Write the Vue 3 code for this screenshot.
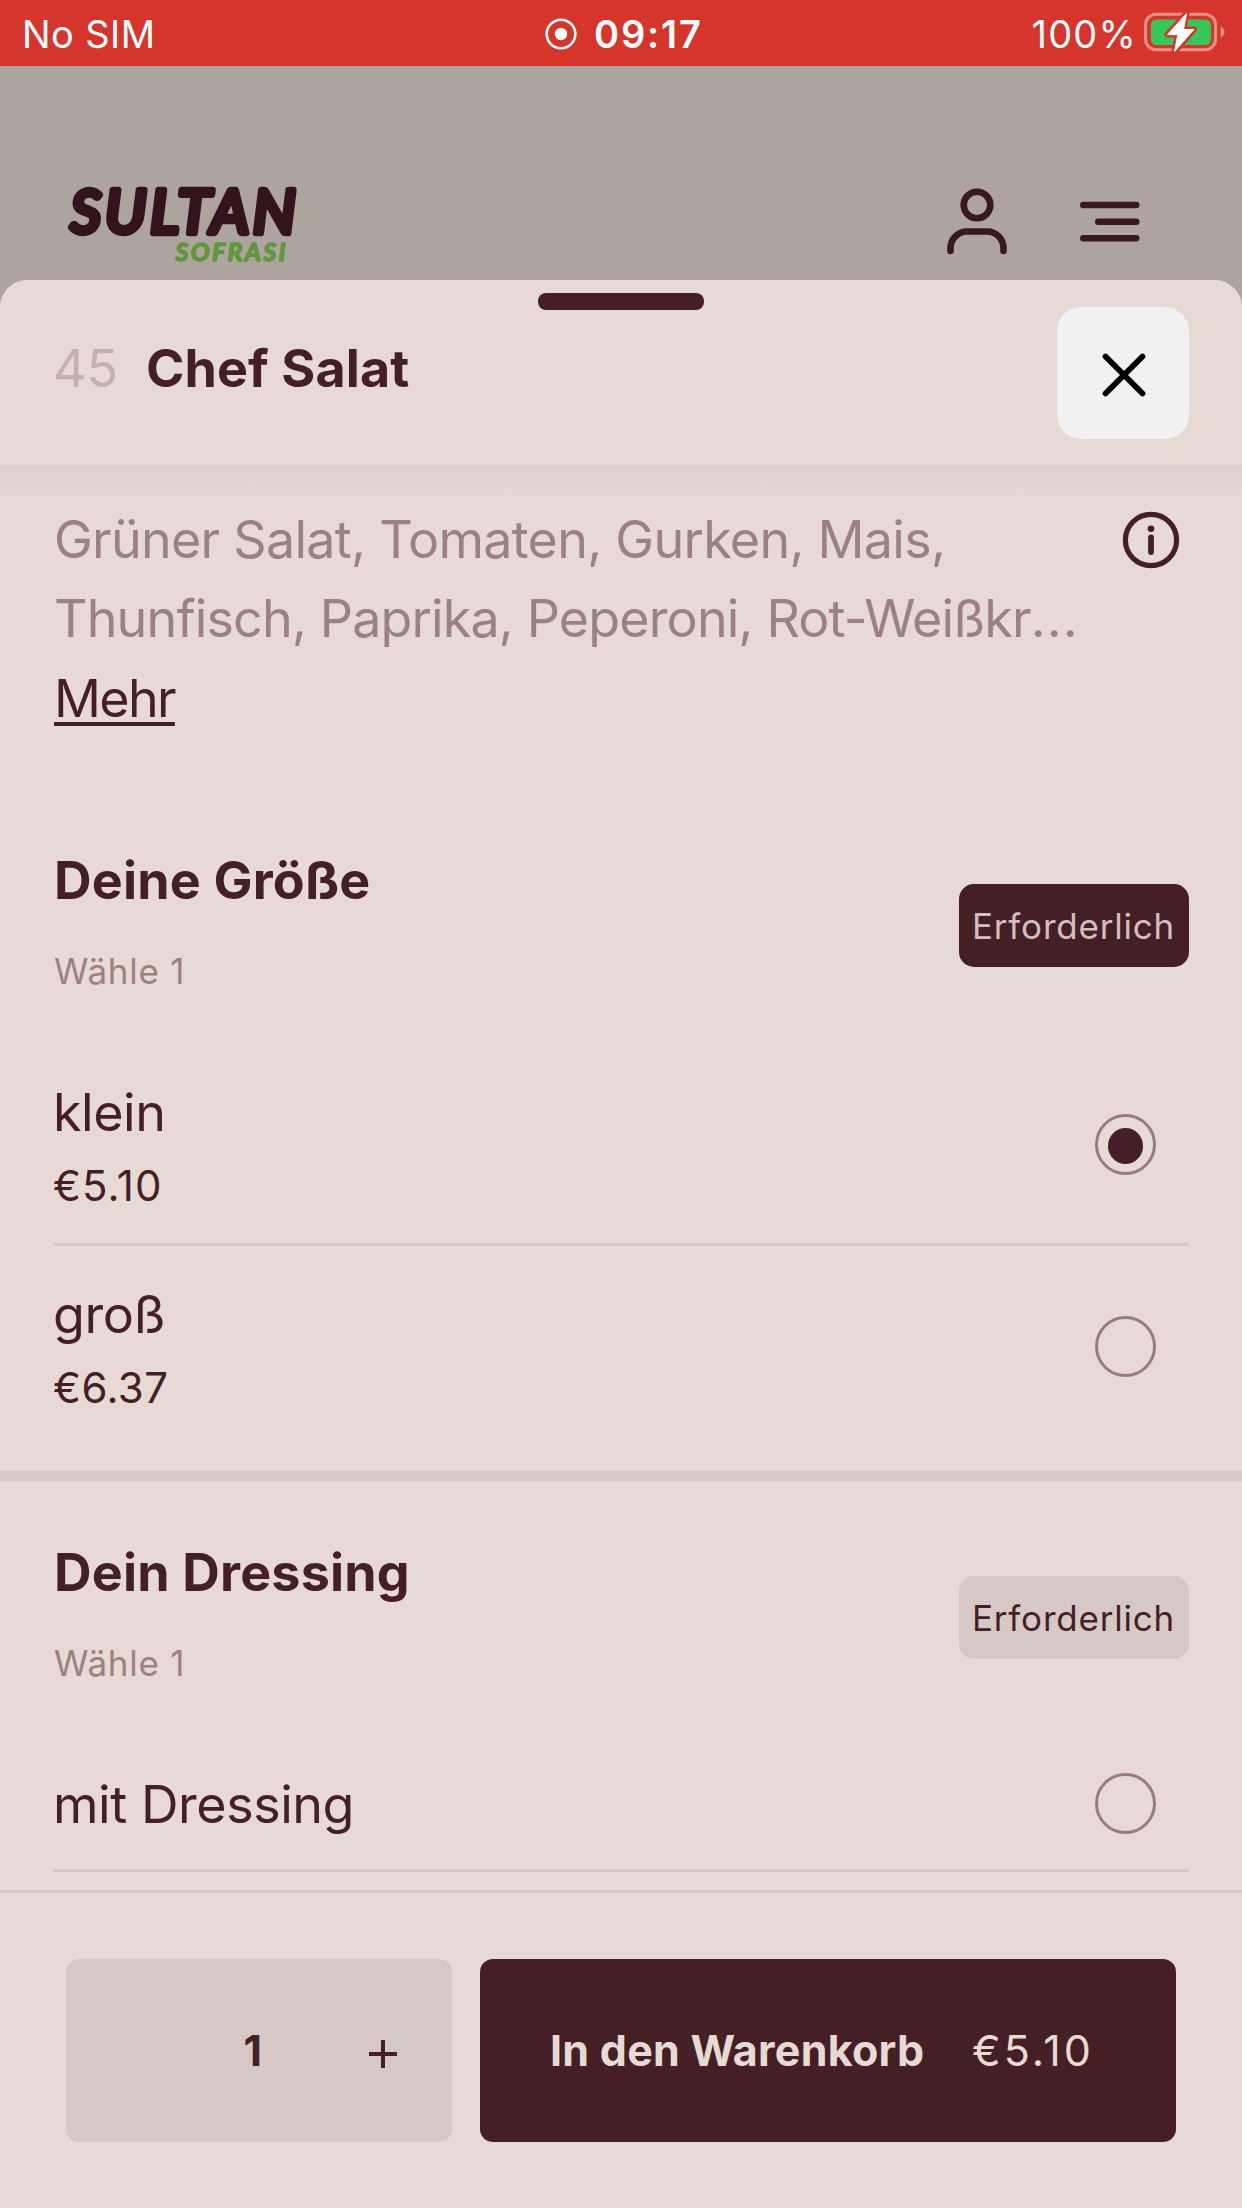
<script setup>
import { ref } from 'vue'

const quantity = ref(1)
const groups = ref([
  {
    title: 'Deine Größe',
    hint: 'Wähle 1',
    selected: 'klein',
    options: [
      { name: 'klein', price: '€5.10', tracking: 'wide' },
      { name: 'groß', price: '€6.37', tracking: '' },
    ],
  },
  {
    title: 'Dein Dressing',
    hint: 'Wähle 1',
    selected: null,
    options: [{ name: 'mit Dressing' }],
  },
])
</script>

<template>
  <div class="screen">
    <div class="status-bar">
      <span class="carrier">No SIM</span>
      <div class="clock">
        <svg width="32" height="32" viewBox="0 0 32 32">
          <circle cx="16" cy="16" r="14.3" fill="none" stroke="#fff" stroke-width="2.6" />
          <circle cx="16" cy="16" r="6.2" fill="#fff" />
        </svg>
        <span>09:17</span>
      </div>
      <div class="power">
        <span>100%</span>
        <svg width="82" height="42" viewBox="0 0 82 42">
          <rect x="1.5" y="3.2" width="70" height="35.5" rx="10.5" fill="none" stroke="#e98f89" stroke-width="3" />
          <path d="M76.5 15.5c2.8 1.2 4 3 4 5.5s-1.2 4.3-4 5.5z" fill="#e98f89" />
          <rect x="7" y="8.5" width="60" height="25.5" rx="5.5" fill="#35c759" />
          <path d="M42.5 2.5 23.5 23.6h10.3L30.5 40.5 50 18.5H39.5z" fill="#fff" stroke="#d6352c" stroke-width="6" stroke-linejoin="round" />
          <path d="M42.5 2.5 23.5 23.6h10.3L30.5 40.5 50 18.5H39.5z" fill="#fff" stroke="#fff" stroke-width="1" stroke-linejoin="round" />
        </svg>
      </div>
    </div>

    <header class="site-header">
      <svg class="logo" width="240" height="110" viewBox="0 -20 240 110">
        <text class="logo-main" x="5.5" y="52.5" textLength="225" lengthAdjust="spacing">SULTAN</text>
        <text class="logo-sub" x="110.500" y="80.500" textLength="110" lengthAdjust="spacing">SOFRASI</text>
      </svg>
      <div class="site-icons">
        <svg width="64" height="70" viewBox="0 0 64 70" class="line-icon">
          <circle cx="32" cy="17" r="13.3" />
          <path d="M5.5 63v-3A16.5 16.5 0 0 1 22 43.5h20A16.5 16.5 0 0 1 58.5 60v3" />
        </svg>
        <svg width="64" height="70" viewBox="0 0 64 70" class="line-icon">
          <path d="M6.300 17h52.900M21.300 33.700h37.900M6.300 50.200h52.900" />
        </svg>
      </div>
    </header>

    <main class="sheet">
      <div class="sheet-header">
        <div class="handle"></div>
        <div class="product">
          <span class="number">45</span>
          <h1>Chef Salat</h1>
        </div>
        <button class="close" aria-label="Schließen">
          <svg width="46" height="46" viewBox="0 0 46 46">
            <path d="M4.5 4.5l37 37M41.5 4.5l-37 37" fill="none" stroke="#000" stroke-width="5.8" stroke-linecap="round" />
          </svg>
        </button>
      </div>

      <div class="content">
        <section class="description">
          <div class="copy">
            <p>Grüner Salat, Tomaten, Gurken, Mais,</p>
            <p class="clipped">Thunfisch, Paprika, Peperoni, Rot-Weißkr<span class="dots">...</span></p>
            <a class="more">Mehr</a>
          </div>
          <svg class="info" width="58" height="58" viewBox="0 0 58 58">
            <circle cx="29" cy="29" r="25.6" fill="none" stroke="#451f26" stroke-width="5.2" />
            <circle cx="29" cy="17.8" r="3.3" fill="#451f26" />
            <path d="M29 26.5v14.5" stroke="#451f26" stroke-width="5.8" stroke-linecap="round" />
          </svg>
        </section>

        <section v-for="group in groups" :key="group.title" class="group">
          <div class="group-header">
            <div>
              <h2>{{ group.title }}</h2>
              <p class="hint">{{ group.hint }}</p>
            </div>
            <span class="badge" :class="{ filled: group.selected }">Erforderlich</span>
          </div>
          <div class="options">
            <div v-for="option in group.options" :key="option.name" class="option" @click="group.selected = option.name">
              <div>
                <div class="name">{{ option.name }}</div>
                <div v-if="option.price" class="price" :class="option.tracking">{{ option.price }}</div>
              </div>
              <span class="radio"><i v-if="group.selected === option.name"></i></span>
            </div>
          </div>
        </section>
      </div>

      <footer class="footer">
        <div class="stepper">
          <span class="quantity">{{ quantity }}</span>
          <svg class="plus" width="30" height="30" viewBox="0 0 30 30">
            <path d="M15 1v28M1 15h28" stroke="#451f26" stroke-width="4" />
          </svg>
        </div>
        <button class="add">
          <span class="add-label">In den Warenkorb</span>
          <span class="add-price">€5.10</span>
        </button>
      </footer>
    </main>
  </div>
</template>

<style>
body {
  margin: 0;
}
</style>

<style scoped>
.screen {
  box-sizing: border-box;
  display: flex;
  flex-direction: column;
  width: 1242px;
  height: 2208px;
  overflow: hidden;
  background: #ada49f;
  color: #451f26;
  font-family: Inter, "Liberation Sans", sans-serif;
}
h1,
h2,
p {
  margin: 0;
}
button {
  border: 0;
  padding: 0;
  font-family: inherit;
}
svg {
  display: block;
  flex: none;
}

.status-bar {
  display: grid;
  grid-template-columns: 545px 1fr auto;
  align-items: center;
  box-sizing: border-box;
  height: 66px;
  padding: 2px 16px 0 0;
  background: #d6352c;
  color: #fff;
  font-size: 38px;
  line-height: 64px;
}
.carrier {
  padding-left: 22px;
  letter-spacing: 0.4px;
}
.clock {
  display: flex;
  align-items: center;
  gap: 17px;
  font-weight: 600;
  letter-spacing: 1.85px;
}
.power {
  display: flex;
  align-items: center;
  gap: 7px;
  letter-spacing: 1.2px;
}
.power svg {
  margin-top: -4px;
}

.site-header {
  display: flex;
  justify-content: space-between;
  box-sizing: border-box;
  height: 214px;
  padding: 94px 101px 0 65px;
}
.logo text {
  font-family: Lato, sans-serif;
  font-style: italic;
  stroke-linejoin: round;
  stroke-linecap: round;
}
.logo-main {
  font-size: 60px;
  fill: #33141a;
  stroke: #33141a;
  stroke-width: 6.4px;
}
.logo-sub {
  font-size: 25px;
  font-weight: 700;
  fill: #62963a;
  stroke: #62963a;
  stroke-width: 1.5px;
}
.site-icons {
  display: flex;
  gap: 68px;
  padding-top: 28px;
}
.line-icon {
  fill: none;
  stroke: #37191f;
  stroke-width: 6.6px;
  stroke-linecap: round;
}

.sheet {
  display: flex;
  flex-direction: column;
  flex: 1;
  min-height: 0;
  overflow: hidden;
  border-radius: 27px 27px 0 0;
  background: #e7dad5;
}
.sheet-header {
  position: relative;
  display: flex;
  align-items: flex-start;
  justify-content: space-between;
  box-sizing: border-box;
  height: 185px;
  padding: 27px 53px 0;
}
.handle {
  position: absolute;
  top: 13px;
  left: 538px;
  width: 166px;
  height: 17px;
  border-radius: 8px;
  background: #451f26;
}
.product {
  display: flex;
  padding-top: 30px;
  font-size: 52px;
  line-height: 64px;
}
.number {
  width: 93px;
  color: #c4b1af;
  font-weight: 400;
}
h1 {
  font-size: 52px;
  font-weight: 700;
  letter-spacing: 0.1px;
}
.close {
  display: flex;
  align-items: center;
  justify-content: center;
  width: 132px;
  height: 132px;
  padding: 4px 0 0 2px;
  border-radius: 24px;
  background: #f1f1f1;
}

.content {
  height: 1425px;
  overflow: hidden;
  background: linear-gradient(#dacfcb, #e7dad5 35px);
}
.description {
  display: flex;
  justify-content: space-between;
  align-items: flex-start;
  height: 349px;
  padding: 35px 62px 0 54px;
  font-size: 52px;
  line-height: 79.3px;
}
.copy {
  white-space: nowrap;
}
.copy p {
  color: #9b8180;
  letter-spacing: -0.72px;
}
.copy .clipped {
  letter-spacing: -0.85px;
}
.dots {
  letter-spacing: 1px;
}
.more {
  letter-spacing: -1.7px;
  text-decoration: underline;
  text-decoration-thickness: 4px;
  text-underline-offset: 5px;
  text-decoration-skip-ink: none;
}
.info {
  margin-top: 11px;
}

.group + .group {
  border-top: 10px solid #d6c8c4;
}
.group {
  box-sizing: border-box;
}
.group-header {
  display: flex;
  justify-content: space-between;
  align-items: flex-start;
  height: 146px;
  padding: 0 53px 0 54px;
}
.group + .group .group-header {
  padding-top: 60px;
}
h2 {
  font-size: 52px;
  font-weight: 700;
  line-height: 64px;
  letter-spacing: 0.2px;
}
.hint {
  margin-top: 34px;
  color: #9b8180;
  font-size: 35px;
  line-height: 48px;
  letter-spacing: 0.75px;
}
.badge {
  box-sizing: border-box;
  width: 230px;
  height: 83px;
  margin-top: 35px;
  padding-left: 13px;
  border-radius: 15px;
  background: #d6c8c4;
  font-size: 35px;
  line-height: 84px;
  letter-spacing: 0.8px;
}
.badge.filled {
  background: #451f26;
  color: #d2bfbb;
}
.options {
  padding: 49px 53px 0;
}
.option {
  display: flex;
  justify-content: space-between;
  align-items: center;
  padding: 37px 33px 29px 0;
}
.option + .option {
  border-top: 3px solid #d6c8c4;
  padding-bottom: 55px;
}
.option:only-child {
  border-bottom: 3px solid #d6c8c4;
  padding-bottom: 32px;
}
.name {
  font-size: 52px;
  line-height: 64px;
  letter-spacing: -0.45px;
}
.price {
  margin-top: 13px;
  font-size: 42px;
  line-height: 56px;
  letter-spacing: 0.4px;
}
.price.wide {
  letter-spacing: 1px;
}
.radio {
  display: flex;
  align-items: center;
  justify-content: center;
  box-sizing: border-box;
  width: 61px;
  height: 61px;
  margin-bottom: 6px;
  border: 3px solid #967d7c;
  border-radius: 50%;
}
.option:only-child .radio {
  margin-bottom: 3px;
}
.radio i {
  width: 35px;
  height: 36px;
  margin-top: 2px;
  border-radius: 50%;
  background: #451f26;
}

.footer {
  display: flex;
  gap: 28px;
  box-sizing: border-box;
  flex: 1;
  padding: 66px 66px 0;
  border-top: 3px solid #d6c8c4;
}
.stepper {
  display: flex;
  align-items: center;
  justify-content: flex-end;
  box-sizing: border-box;
  width: 386px;
  height: 183px;
  padding-right: 54px;
  border-radius: 13px;
  background: #d6c8c4;
}
.quantity {
  margin: -1px 106px 0 0;
  font-size: 43px;
  font-weight: 700;
}
.plus {
  margin-top: 6px;
}
.add {
  display: flex;
  align-items: center;
  width: 696px;
  height: 183px;
  padding: 0 0 1px 70px;
  border-radius: 13px;
  background: #451f26;
  color: #e7dad5;
  font-size: 43px;
}
.add-label {
  width: 422px;
  text-align: left;
  font-weight: 700;
  letter-spacing: 0.25px;
  white-space: nowrap;
}
.add-price {
  letter-spacing: 3px;
  font-weight: 400;
}
</style>
